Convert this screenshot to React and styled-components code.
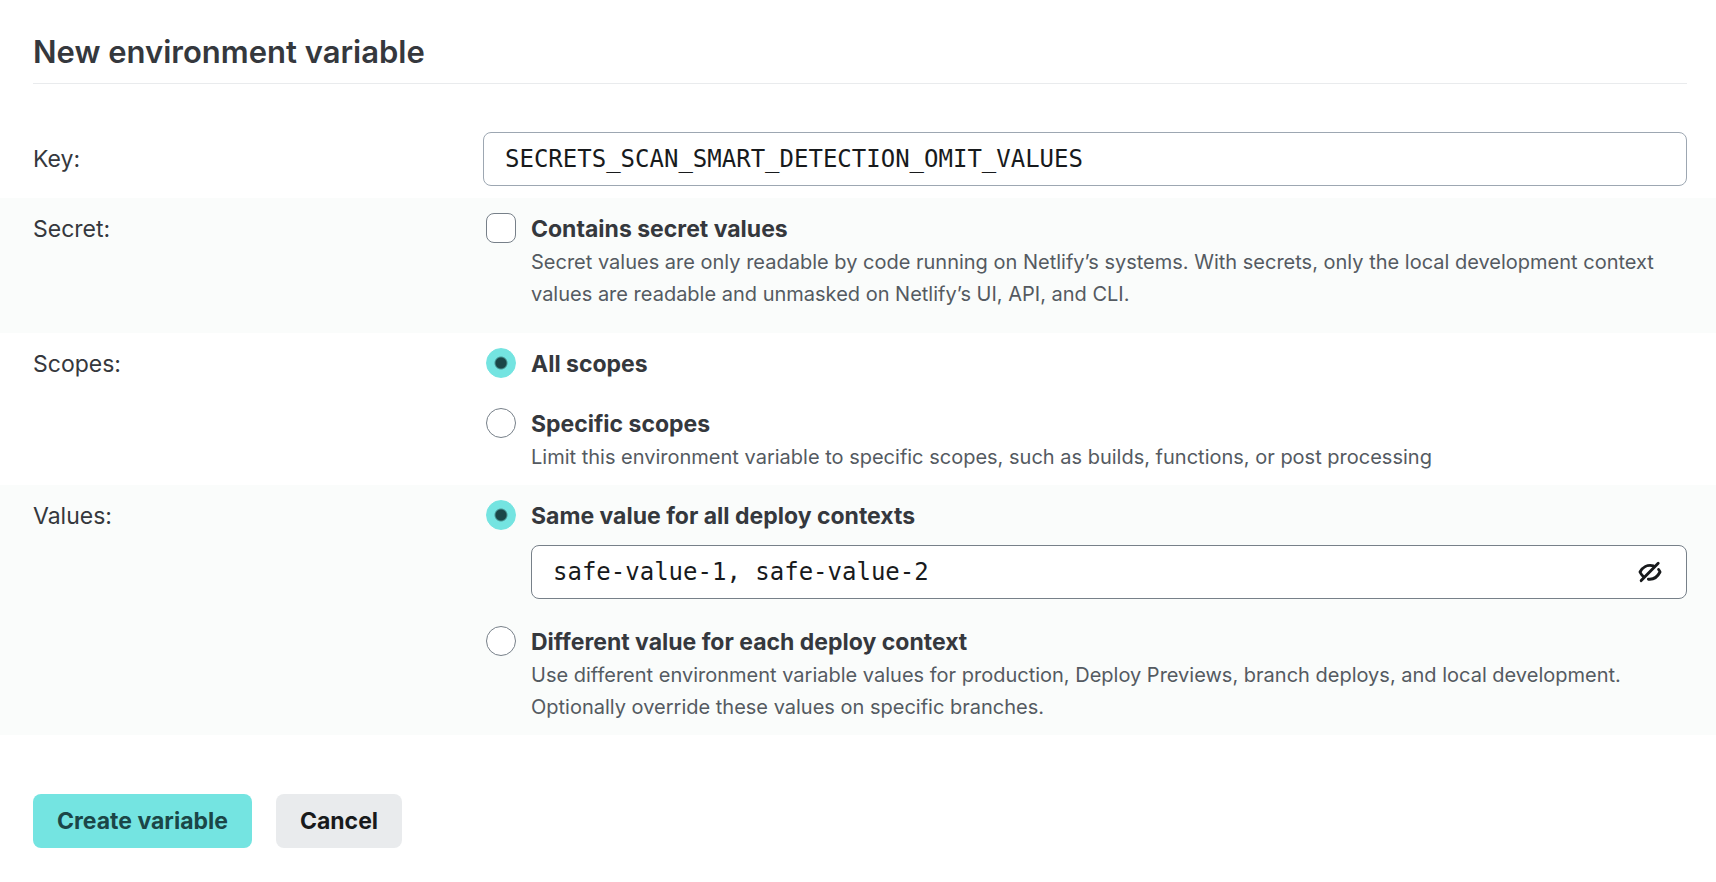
import React from "react";
import styled, { createGlobalStyle, css } from "styled-components";

const GlobalStyle = createGlobalStyle`
  *, *::before, *::after { box-sizing: border-box; }
  body {
    margin: 0;
    background: #fff;
    color: #35383d;
    font-family: Inter, "Liberation Sans", sans-serif;
    font-size: 23px;
    line-height: 32px;
  }
`;

const Form = styled.form`
  min-height: 100vh;
  padding: 30px 0;
  background: #fff;
`;

const Header = styled.header`
  margin: 0 29px 36px 33px;
  padding-bottom: 10px;
  border-bottom: 1px solid #e9ebed;
`;

const Title = styled.h1`
  margin: 0;
  font-size: 31px;
  line-height: 43px;
  font-weight: 600;
`;

const rowStyles = css`
  display: grid;
  grid-template-columns: 450px minmax(0, 1fr);
  padding: 15px 29px 12px 33px;
  background: ${({ $tinted }) => ($tinted ? "#fafcfb" : "#fff")};
`;

const Row = styled.div`
  ${rowStyles}
  padding-top: 12px;
  align-items: center;
`;

const GroupRow = styled.div`
  ${rowStyles}
`;

const Options = styled.div`
  display: flex;
  flex-direction: column;
  gap: ${({ $gap }) => $gap || 28}px;
  padding-left: 3px;
`;

const Option = styled.div`
  display: grid;
  grid-template-columns: 30px minmax(0, 1fr);
  column-gap: 15px;
  padding-bottom: ${({ $spaced }) => ($spaced ? 11 : 0)}px;
`;

const OptionLabel = styled.label`
  font-weight: 700;
`;

const Help = styled.p`
  grid-column: 2;
  margin: 1px 0 0;
  color: #545a61;
  font-size: 20px;
  line-height: 32px;
`;

const choiceStyles = css`
  appearance: none;
  width: 30px;
  height: 30px;
  margin: 0;
  border: 1px solid #778089;
  background: #fff;
`;

const Checkbox = styled.input.attrs({ type: "checkbox" })`
  ${choiceStyles}
  border-radius: 8px;
  &:checked { background: #74e4e1; }
`;

const Radio = styled.input.attrs({ type: "radio" })`
  ${choiceStyles}
  border-radius: 50%;
  &:checked {
    border-color: #74e4e1;
    background: radial-gradient(circle, #1b4647 5px, #74e4e1 7px);
  }
`;

const TextInput = styled.input.attrs({ type: "text" })`
  width: 100%;
  height: 54px;
  padding: 0 21px;
  border: 1px solid ${({ $strong }) => ($strong ? "#778089" : "#9da7b2")};
  border-radius: 8px;
  background: #fff;
  color: #181a1c;
  font-family: "DejaVu Sans Mono", monospace;
  font-size: 24px;
`;

const ValueField = styled.div`
  grid-column: 2;
  display: grid;
  grid-template-columns: minmax(0, 1fr) 74px;
  align-items: center;
  margin-top: 13px;

  & > ${TextInput} { grid-area: 1 / 1 / 2 / 3; padding-right: 74px; }
`;

const IconButton = styled.button.attrs({ type: "button" })`
  grid-area: 1 / 2;
  justify-self: center;
  z-index: 1;
  display: flex;
  padding: 0;
  border: 0;
  background: none;
  color: #181a1c;
  cursor: pointer;
`;

const Actions = styled.footer`
  display: flex;
  gap: 24px;
  margin-top: 59px;
  padding: 0 33px;
`;

const Button = styled.button`
  height: 54px;
  padding: 0 24px;
  border: 0;
  border-radius: 8px;
  background: ${({ $primary }) => ($primary ? "#74e4e1" : "#e9ebed")};
  color: ${({ $primary }) => ($primary ? "#1b4647" : "#181a1c")};
  font-family: inherit;
  font-size: 23px;
  font-weight: 700;
  cursor: pointer;
`;

function HiddenIcon() {
  return (
    <svg width="24" height="24" viewBox="0 0 24 24" fill="none" stroke="currentColor" strokeWidth="2.9" strokeLinecap="round" strokeLinejoin="round" aria-hidden="true">
      <path d="M20.2 3.2 3.2 20.6" />
      <path d="M15.5 5.9C9.500 4.300 4.600 7.200 2 12c.8 1.700 1.800 3.100 3.200 4.300" />
      <path d="M20.600 9.500C21.200 10.300 21.700 11.100 22 12c-2.600 5.100-6.600 7.800-11.600 7.200" />
    </svg>
  );
}

export default function App() {
  return (
    <>
      <GlobalStyle />
      <Form onSubmit={(event) => event.preventDefault()}>
        <Header>
          <Title>New environment variable</Title>
        </Header>

        <Row>
          <label htmlFor="key">Key:</label>
          <TextInput id="key" defaultValue="SECRETS_SCAN_SMART_DETECTION_OMIT_VALUES" />
        </Row>

        <GroupRow $tinted role="group" aria-labelledby="secret-title">
          <div id="secret-title">Secret:</div>
          <Options>
            <Option $spaced>
              <Checkbox id="secret" aria-describedby="secret-help" />
              <OptionLabel htmlFor="secret">Contains secret values</OptionLabel>
              <Help id="secret-help">
                Secret values are only readable by code running on Netlify’s systems. With secrets, only the local
                development context values are readable and unmasked on Netlify’s UI, API, and CLI.
              </Help>
            </Option>
          </Options>
        </GroupRow>

        <GroupRow role="radiogroup" aria-labelledby="scopes-title">
          <div id="scopes-title">Scopes:</div>
          <Options>
            <Option>
              <Radio id="all-scopes" name="scopes" defaultChecked />
              <OptionLabel htmlFor="all-scopes">All scopes</OptionLabel>
            </Option>
            <Option>
              <Radio id="specific-scopes" name="scopes" aria-describedby="scopes-help" />
              <OptionLabel htmlFor="specific-scopes">Specific scopes</OptionLabel>
              <Help id="scopes-help">
                Limit this environment variable to specific scopes, such as builds, functions, or post processing
              </Help>
            </Option>
          </Options>
        </GroupRow>

        <GroupRow $tinted role="radiogroup" aria-labelledby="values-title">
          <div id="values-title">Values:</div>
          <Options $gap={27}>
            <Option>
              <Radio id="same-value" name="values" defaultChecked />
              <OptionLabel htmlFor="same-value">Same value for all deploy contexts</OptionLabel>
              <ValueField>
                <TextInput $strong aria-label="Value for all deploy contexts" defaultValue="safe-value-1, safe-value-2" />
                <IconButton aria-label="Hide value">
                  <HiddenIcon />
                </IconButton>
              </ValueField>
            </Option>
            <Option>
              <Radio id="different-values" name="values" aria-describedby="values-help" />
              <OptionLabel htmlFor="different-values">Different value for each deploy context</OptionLabel>
              <Help id="values-help">
                Use different environment variable values for production, Deploy Previews, branch deploys, and local
                development. Optionally override these values on specific branches.
              </Help>
            </Option>
          </Options>
        </GroupRow>

        <Actions>
          <Button type="submit" $primary>Create variable</Button>
          <Button type="button">Cancel</Button>
        </Actions>
      </Form>
    </>
  );
}
